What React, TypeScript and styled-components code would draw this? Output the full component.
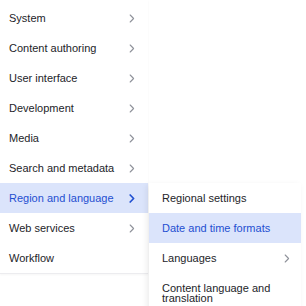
import React from "react"
import styled, { createGlobalStyle } from "styled-components"

const Global = createGlobalStyle`
  html, body {
    margin: 0;
    padding: 0;
    background: #ffffff;
  }
  body {
    font-family: "Liberation Sans", Arial, sans-serif;
    -webkit-font-smoothing: antialiased;
  }
`

interface ItemProps {
  $active?: boolean
}

export const S = {
  Page: styled.div`
    width: 306px;
    height: 306px;
    overflow: hidden;
    position: relative;
  `,

  Menu: styled.ul`
    list-style: none;
    margin: 0;
    padding: 3px 0 0;
    width: 148px;
    background: #ffffff;
    border-bottom: 1px solid #ececef;
    box-shadow: 0 1px 2px rgba(0, 0, 0, 0.04);
  `,

  Item: styled.li<ItemProps>`
    position: relative;
    display: flex;
    align-items: center;
    justify-content: space-between;
    height: 30px;
    padding: 0 13px 0 9px;
    box-sizing: border-box;
    font-size: 11px;
    line-height: 1;
    color: ${(p) => (p.$active ? "#1f4fd1" : "#232429")};
    background: ${(p) => (p.$active ? "#dbe4fb" : "transparent")};
    white-space: nowrap;
  `,

  Flyout: styled.ul`
    position: absolute;
    left: 149px;
    top: 0;
    z-index: 2;
    list-style: none;
    margin: 0;
    padding: 0;
    width: 152px;
    background: #ffffff;
    box-shadow: -2px 2px 6px rgba(0, 0, 0, 0.08);
  `,

  SubItem: styled.li<ItemProps>`
    display: flex;
    align-items: center;
    justify-content: space-between;
    padding: 10px 11px 10px 13px;
    box-sizing: border-box;
    font-size: 11px;
    line-height: 10px;
    color: ${(p) => (p.$active ? "#1f4fd1" : "#232429")};
    background: ${(p) => (p.$active ? "#dbe4fb" : "transparent")};
  `,

  Label: styled.span`
    white-space: normal;
    max-width: 120px;
  `,
}

const Chevron = ({ active }: { active?: boolean }) => (
  <svg width="6" height="9" viewBox="0 0 6 9" style={{ flex: "none" }}>
    <polyline
      points="1.2,1 4.6,4.5 1.2,8"
      fill="none"
      stroke={active ? "#1f4fd1" : "#8f929a"}
      strokeWidth={active ? 1.7 : 1.1}
      strokeLinecap="round"
      strokeLinejoin="round"
    />
  </svg>
)

const items = [
  { label: "System", sub: true },
  { label: "Content authoring", sub: true },
  { label: "User interface", sub: true },
  { label: "Development", sub: true },
  { label: "Media", sub: true },
  { label: "Search and metadata", sub: true },
  { label: "Region and language", sub: true, active: true },
  { label: "Web services", sub: true },
  { label: "Workflow", sub: false },
]

const subItems = [
  { label: "Regional settings" },
  { label: "Date and time formats", active: true },
  { label: "Languages", sub: true },
  { label: "Content language and translation" },
]

export default function App() {
  return (
    <S.Page>
      <Global />
      <S.Menu>
        {items.map((it) => (
          <S.Item key={it.label} $active={it.active}>
            <span>{it.label}</span>
            {it.sub && <Chevron active={it.active} />}
            {it.active && (
              <S.Flyout>
                {subItems.map((s) => (
                  <S.SubItem key={s.label} $active={s.active}>
                    <S.Label>{s.label}</S.Label>
                    {s.sub && <Chevron />}
                  </S.SubItem>
                ))}
              </S.Flyout>
            )}
          </S.Item>
        ))}
      </S.Menu>
    </S.Page>
  )
}
